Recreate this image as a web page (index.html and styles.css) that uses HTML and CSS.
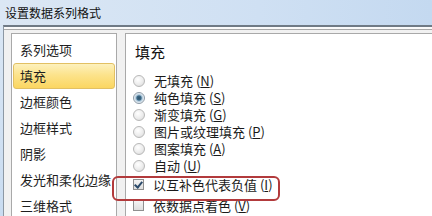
FILE: index.html
```html
<!DOCTYPE html>
<html>
<head>
  <meta charset="utf-8">
  <title>设置数据系列格式</title>
  <link rel="stylesheet" href="styles.css">
</head>
<body>
  <div class="window">
    <div class="titlebar">设置数据系列格式</div>

    <div class="dialog">
      <div class="client">
        <!-- category list -->
        <ul class="nav-list">
          <li>系列选项</li>
          <li class="selected">填充</li>
          <li>边框颜色</li>
          <li>边框样式</li>
          <li>阴影</li>
          <li>发光和柔化边缘</li>
          <li>三维格式</li>
        </ul>

        <!-- fill options -->
        <div class="panel">
          <h3 class="panel-title">填充</h3>
          <div class="option-group">
            <div class="option"><span class="radio"></span>无填充 (<u>N</u>)</div>
            <div class="option"><span class="radio checked"></span>纯色填充 (<u>S</u>)</div>
            <div class="option"><span class="radio"></span>渐变填充 (<u>G</u>)</div>
            <div class="option"><span class="radio"></span>图片或纹理填充 (<u>P</u>)</div>
            <div class="option"><span class="radio"></span>图案填充 (<u>A</u>)</div>
            <div class="option"><span class="radio"></span>自动 (<u>U</u>)</div>
          </div>
          <div class="check-group">
            <div class="check-option"><span class="checkbox checked"></span>以互补色代表负值 (<u>I</u>)</div>
            <div class="check-option"><span class="checkbox"></span>依数据点着色 (<u>V</u>)</div>
          </div>
        </div>
      </div>
    </div>

    <div class="highlight-box"></div>
  </div>
</body>
</html>
```

FILE: styles.css
```css
* {
  box-sizing: border-box;
}

html, body {
  margin: 0;
  padding: 0;
}

body {
  width: 432px;
  height: 216px;
  overflow: hidden;
  font-family: "Noto Sans CJK SC", "Noto Sans", sans-serif;
  color: #1a1a1a;
}

.window {
  position: relative;
  width: 432px;
  height: 216px;
  overflow: hidden;
  background: linear-gradient(to bottom, #dce8f5, #c9dcf1);
}

.titlebar {
  height: 25px;
  line-height: 25px;
  padding-left: 5px;
  font-size: 12px;
  color: #111;
  background: linear-gradient(to right, #dbe7f4 0%, #cfe0f3 60%, #c4d9f0 100%);
}

.dialog {
  margin-left: 3px;
  height: 191px;
  border-top: 2px solid #6f7a85;
  border-left: 1px solid #8c98a4;
  padding-top: 2px;
  background: #fafafa;
}

.client {
  height: 187px;
  overflow: hidden;
  border-top: 1px solid #a8a8a8;
  background: #f1f1f1;
  padding: 3px 0 0 7px;
  display: flex;
  gap: 8px;
}

.nav-list {
  list-style: none;
  margin: 0;
  padding: 3px 0 0 0;
  width: 106px;
  height: 200px;
  flex-shrink: 0;
  background: #fff;
  border: 1px solid #a9a9a9;
}

.nav-list li {
  height: 26px;
  line-height: 26px;
  padding-left: 7px;
  font-size: 13px;
  color: #1e1e1e;
  margin: 0 1px;
}

.nav-list li.selected {
  line-height: 24px;
  padding-left: 6px;
  border: 1px solid #e2c063;
  border-radius: 3px;
  background: linear-gradient(to bottom, #fdf1bd 0%, #fce38c 45%, #fbd661 100%);
}

.panel {
  flex: 1;
  height: 200px;
  background: #fff;
  border-left: 1px solid #a9a9a9;
  border-top: 1px solid #a9a9a9;
  padding-left: 7px;
}

.panel-title {
  margin: 8px 0 10px 2px;
  font-size: 15px;
  font-weight: normal;
  line-height: 20px;
  color: #111;
}

.option,
.check-option {
  display: flex;
  align-items: center;
  font-size: 13px;
  color: #1a1a1a;
}

.option {
  height: 17px;
  line-height: 17px;
}

.check-option {
  height: 21px;
  line-height: 21px;
}

.option u,
.check-option u {
  text-decoration: underline;
  text-underline-offset: 1px;
}

.radio {
  width: 12px;
  height: 12px;
  border-radius: 50%;
  border: 1px solid #b8b8b8;
  background: radial-gradient(circle at 40% 35%, #ffffff 0%, #ececec 55%, #d4d4d4 100%);
  margin-right: 9px;
  flex-shrink: 0;
}

.radio.checked {
  border-color: #8d9aa6;
  background: radial-gradient(circle, #2d4f66 0%, #3c6a88 30%, #a9c4d8 45%, #eef3f7 70%, #d6dde3 100%);
}

.checkbox {
  width: 11px;
  height: 11px;
  border: 1px solid #8f8f8f;
  background: linear-gradient(to bottom, #f4f4f4, #dedede);
  margin-right: 9px;
  flex-shrink: 0;
  position: relative;
}

.checkbox.checked::after {
  content: "";
  position: absolute;
  left: 2px;
  top: 0;
  width: 3px;
  height: 6px;
  border-right: 2px solid #2b4a6a;
  border-bottom: 2px solid #2b4a6a;
  transform: rotate(40deg);
}

.highlight-box {
  position: absolute;
  left: 112px;
  top: 176px;
  width: 168px;
  height: 25px;
  border: 2px solid #b23a3c;
  border-radius: 6px;
}
```
